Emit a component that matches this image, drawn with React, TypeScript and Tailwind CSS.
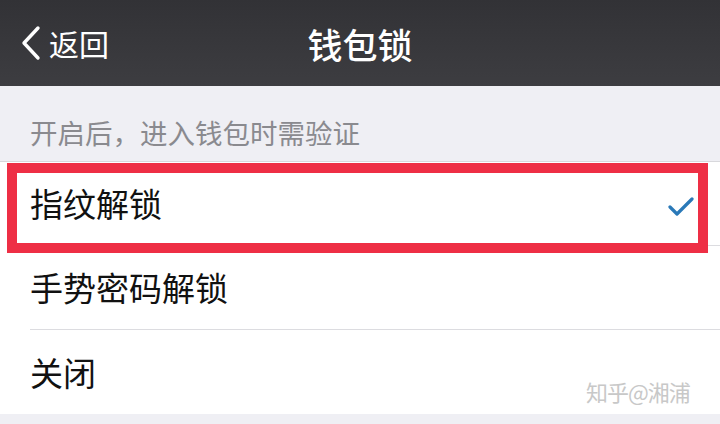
import React from 'react';

const font = { fontFamily: '"Noto Sans CJK SC", "Noto Sans", sans-serif' };

const Row: React.FC<{ label: string; checked?: boolean; last?: boolean }> = ({
  label,
  checked,
  last,
}) => (
  <div className="pl-[30px]">
    <div
      className={`flex h-[84px] items-center justify-between pr-[26px] ${
        last ? '' : 'border-b border-[#dcdce0]'
      }`}
    >
      <span className="text-[33px] leading-none text-[#111]">{label}</span>
      {checked ? (
        <svg width="26" height="20" viewBox="0 0 26 20" className="mt-1">
          <path
            d="M2 11 L9 18 L24 3"
            fill="none"
            stroke="#2a79b8"
            strokeWidth="3.2"
            strokeLinecap="round"
            strokeLinejoin="round"
          />
        </svg>
      ) : null}
    </div>
  </div>
);

export default function App() {
  return (
    <div className="relative h-[424px] w-[720px] overflow-hidden bg-[#efeff4]" style={font}>
      <div className="relative flex h-[86px] items-center bg-gradient-to-b from-[#323236] to-[#3d3d41]">
        <div className="flex items-center pl-[20px] text-white">
          <svg width="22" height="36" viewBox="0 0 22 36">
            <path
              d="M18 3 L4 18 L18 33"
              fill="none"
              stroke="#fff"
              strokeWidth="3.4"
              strokeLinecap="round"
              strokeLinejoin="round"
            />
          </svg>
          <span className="ml-[7px] text-[30px] leading-none">返回</span>
        </div>
        <div className="absolute inset-x-0 top-0 flex h-full items-center justify-center">
          <span className="text-[35px] font-medium leading-none text-white">钱包锁</span>
        </div>
      </div>

      <div className="flex h-[75px] items-end pb-[15px] pl-[30px]">
        <span className="text-[27.5px] leading-none text-[#8a8a8f]">开启后，进入钱包时需验证</span>
      </div>

      <div className="border-t border-[#d8d8dc] bg-white">
        <Row label="指纹解锁" checked />
        <Row label="手势密码解锁" />
        <Row label="关闭" last />
      </div>

      <div className="pointer-events-none absolute left-[7px] top-[163px] h-[90px] w-[701px] border-[10px] border-[#ee2f45]" />

      <div className="absolute left-[586px] top-[380px] text-[22px] leading-none tracking-[-1px] text-[#c8c8c8]">
        知乎@湘浦
      </div>
    </div>
  );
}
